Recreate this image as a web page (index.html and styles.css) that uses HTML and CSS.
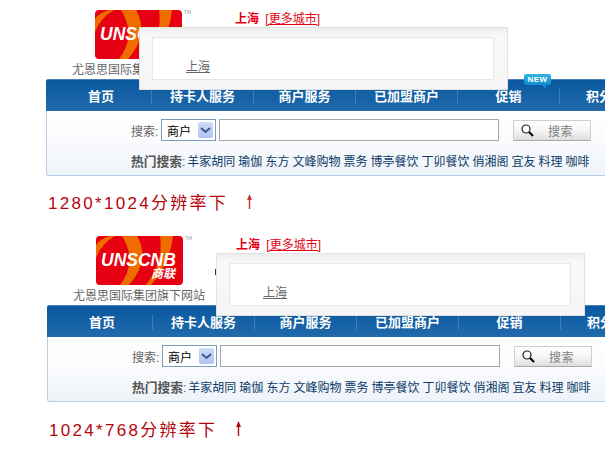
FILE: index.html
```html
<!DOCTYPE html>
<html lang="zh-CN">
<head>
    <meta charset="UTF-8">
    <title>分辨率对比</title>
    <link rel="stylesheet" href="styles.css">
</head>
<body>
    <!-- 1280*1024 -->
    <section class="shot shot-large">
        <div class="top">
            <div class="brand">
                <svg class="logo" width="87" height="49" viewBox="0 0 87 49">
                    <rect width="87" height="49" rx="4" fill="#e60012"/>
                    <path d="M0 9Q5 2 15 0H19Q6 7 0 22Z" fill="#ef6c00"/>
                    <path d="M26 0H41Q55 24 33 49H24Q42 26 26 0Z" fill="#ef6c00"/>
                    <path d="M64 0H77Q74 28 55 49H50Q68 26 64 0Z" fill="#ef6c00"/>
                    <text class="logo-name" x="5" y="30">UNSCNB</text>
                    <text class="logo-sub" x="55" y="42">商联</text>
                </svg>
                <span class="tm">TM</span>
                <p class="tagline">尤恩思国际集团旗下网站</p>
            </div>
            <div class="city"><b>上海</b> <a href="#">[更多城市]</a></div>
            <i class="peek"></i>
        </div>
        <nav class="nav">
            <a href="#">首页</a>
            <a href="#">持卡人服务</a>
            <a href="#">商户服务</a>
            <a href="#">已加盟商户</a>
            <a href="#" class="has-new">促销<span class="new">NEW</span></a>
            <a href="#">积分</a>
        </nav>
        <div class="search">
            <div class="search-row">
                <span class="search-label">搜索:</span>
                <div class="select">商户<span class="select-arrow"><svg width="11" height="7" viewBox="0 0 11 7"><path d="M1 1L5.5 5L10 1" fill="none" stroke="#3e5a8c" stroke-width="2"/></svg></span></div>
                <input class="search-input" type="text">
                <button class="search-btn" type="button">
                    <svg width="13" height="13" viewBox="0 0 13 13"><circle cx="5" cy="5" r="4" fill="#fff" stroke="#222" stroke-width="1.2"/><path d="M8 8L12 12" stroke="#000" stroke-width="2.2"/></svg>
                    <span>搜索</span>
                </button>
            </div>
            <div class="hot">
                <b>热门搜索</b>:<a href="#">羊家胡同</a><a href="#">瑜伽</a><a href="#">东方</a><a href="#">文峰购物</a><a href="#">票务</a><a href="#">博亭餐饮</a><a href="#">丁卯餐饮</a><a href="#">俏湘阁</a><a href="#">宜友</a><a href="#">料理</a><a href="#">咖啡</a>
            </div>
        </div>
        <p class="caption">1280*1024分辨率下<svg class="arrow" width="5" height="15" viewBox="0 0 5 15"><path d="M2.5 0L5 6H3.2V15H1.8V6H0Z" fill="#c8313a"/></svg></p>
        <div class="popup">
            <div class="popup-inner"><a href="#">上海</a></div>
        </div>
    </section>

    <!-- 1024*768 -->
    <section class="shot shot-small">
        <div class="top">
            <div class="brand">
                <svg class="logo" width="87" height="49" viewBox="0 0 87 49">
                    <rect width="87" height="49" rx="4" fill="#e60012"/>
                    <path d="M0 9Q5 2 15 0H19Q6 7 0 22Z" fill="#ef6c00"/>
                    <path d="M26 0H41Q55 24 33 49H24Q42 26 26 0Z" fill="#ef6c00"/>
                    <path d="M64 0H77Q74 28 55 49H50Q68 26 64 0Z" fill="#ef6c00"/>
                    <text class="logo-name" x="5" y="30">UNSCNB</text>
                    <text class="logo-sub" x="55" y="42">商联</text>
                </svg>
                <span class="tm">TM</span>
                <p class="tagline">尤恩思国际集团旗下网站</p>
            </div>
            <div class="city"><b>上海</b> <a href="#">[更多城市]</a></div>
            <i class="peek"></i>
        </div>
        <nav class="nav">
            <a href="#">首页</a>
            <a href="#">持卡人服务</a>
            <a href="#">商户服务</a>
            <a href="#">已加盟商户</a>
            <a href="#">促销</a>
            <a href="#">积分</a>
        </nav>
        <div class="search">
            <div class="search-row">
                <span class="search-label">搜索:</span>
                <div class="select">商户<span class="select-arrow"><svg width="11" height="7" viewBox="0 0 11 7"><path d="M1 1L5.5 5L10 1" fill="none" stroke="#3e5a8c" stroke-width="2"/></svg></span></div>
                <input class="search-input" type="text">
                <button class="search-btn" type="button">
                    <svg width="13" height="13" viewBox="0 0 13 13"><circle cx="5" cy="5" r="4" fill="#fff" stroke="#222" stroke-width="1.2"/><path d="M8 8L12 12" stroke="#000" stroke-width="2.2"/></svg>
                    <span>搜索</span>
                </button>
            </div>
            <div class="hot">
                <b>热门搜索</b>:<a href="#">羊家胡同</a><a href="#">瑜伽</a><a href="#">东方</a><a href="#">文峰购物</a><a href="#">票务</a><a href="#">博亭餐饮</a><a href="#">丁卯餐饮</a><a href="#">俏湘阁</a><a href="#">宜友</a><a href="#">料理</a><a href="#">咖啡</a>
            </div>
        </div>
        <p class="caption">1024*768分辨率下<svg class="arrow" width="5" height="15" viewBox="0 0 5 15"><path d="M2.5 0L5 6H3.2V15H1.8V6H0Z" fill="#b5050c"/></svg></p>
        <div class="popup">
            <div class="popup-inner"><a href="#">上海</a></div>
        </div>
    </section>
</body>
</html>
```

FILE: styles.css
```css
html, body {
    margin: 0;
    padding: 0;
    height: 463px;
    overflow: hidden;
    background: #fff;
}

body {
    font-family: "Liberation Sans", "Noto Sans CJK SC", sans-serif;
    font-size: 12px;
    color: #666;
}

a {
    color: inherit;
    text-decoration: none;
}

.shot {
    position: relative;
    height: 226px;
    padding-left: 46px;
}

.shot-small {
    padding-left: 47px;
    height: 237px;
}

/* logo + city */
.top {
    position: relative;
    height: 79px;
    display: flex;
}

.brand {
    position: relative;
    width: 189px;
    padding-top: 10px;
    box-sizing: border-box;
}

.logo {
    display: block;
    margin-left: 49px;
}

.logo-name {
    font: italic bold 17.5px "Liberation Sans", sans-serif;
    fill: #fff;
}

.logo-sub {
    font: italic bold 12px "Noto Sans CJK SC", sans-serif;
    fill: #fff;
}

.tm {
    position: absolute;
    left: 138px;
    top: 9px;
    font-size: 5px;
    color: #999;
}

.tagline {
    margin: 3px 0 0 26px;
    line-height: 16px;
    white-space: nowrap;
}

.city {
    padding-top: 11px;
    line-height: 16px;
    color: #e60012;
    white-space: nowrap;
}

.city a {
    text-decoration: underline;
    margin-left: 3px;
}

.peek {
    position: absolute;
    left: 168px;
    top: 43px;
    width: 2px;
    height: 6px;
    background: #1a3a6a;
}

/* nav */
.nav {
    position: relative;
    display: flex;
    height: 32px;
    box-sizing: border-box;
    border-top: 1px solid #4a80b8;
    border-radius: 2px 0 0 0;
    background: linear-gradient(#09589f, #216aab);
}

.nav a {
    position: relative;
    flex: none;
    width: 102px;
    height: 15px;
    margin-top: 9px;
    line-height: 15px;
    text-align: center;
    font-size: 13px;
    font-weight: bold;
    color: #fff;
    border-right: 1px solid #3f7db8;
    box-sizing: border-box;
}

.nav a:first-child {
    width: 106px;
    padding-left: 5px;
}

.nav a:last-child {
    border-right: none;
    white-space: nowrap;
    text-align: left;
    padding-left: 26px;
}

.new {
    position: absolute;
    left: 66px;
    top: -15px;
    width: 27px;
    height: 11px;
    line-height: 11px;
    border-radius: 2px;
    background: linear-gradient(#35b4e2, #0f8ccb);
    font: bold 8px/11px "Liberation Sans", sans-serif;
    letter-spacing: 0.5px;
}

.new::after {
    content: "";
    position: absolute;
    right: 5px;
    top: 11px;
    border-top: 4px solid #0f8ccb;
    border-left: 4px solid transparent;
}

/* search box */
.search {
    height: 65px;
    box-sizing: border-box;
    border: 1px solid #b7cfe6;
    border-top: none;
    border-right: none;
    border-radius: 0 0 0 3px;
    background: linear-gradient(#fff, #fbfcfe 40%, #eef3f9);
    padding: 8px 0 0 84px;
}

.search-row {
    display: flex;
    align-items: center;
    height: 22px;
}

.search-label {
    width: 30px;
    white-space: nowrap;
}

.select {
    display: flex;
    justify-content: space-between;
    align-items: center;
    width: 55px;
    height: 22px;
    box-sizing: border-box;
    border: 1px solid #7c9cbc;
    padding: 0 2px 0 5px;
    background: #fff;
    color: #000;
}

.select-arrow {
    display: flex;
    align-items: center;
    justify-content: center;
    width: 15px;
    height: 16px;
    border-radius: 2px;
    background: linear-gradient(#d0dcf7, #b0c4ef);
}

.search-input {
    width: 280px;
    height: 22px;
    box-sizing: border-box;
    margin: 0 14px 0 3px;
    padding: 0;
    border: 1px solid #a5a5a5;
    background: #fff;
}

.search-btn {
    display: flex;
    align-items: center;
    width: 78px;
    height: 21px;
    box-sizing: border-box;
    margin: 1px 0 0;
    padding: 0 0 0 7px;
    border: 1px solid #cfcfcf;
    border-bottom-color: #aaa;
    background: linear-gradient(#fff, #f5f5f5 50%, #dedede);
    font: 12px "Noto Sans CJK SC", sans-serif;
    color: #808080;
}

.search-btn span {
    margin-left: 14px;
    letter-spacing: 0.5px;
}

.hot {
    margin-top: 13px;
    line-height: 16px;
    white-space: nowrap;
}

.hot b {
    font-size: 12.75px;
    color: #555;
}

.hot a {
    color: #0b3a68;
    margin-right: 3px;
}

.hot b + a {
    margin-left: 2px;
}

/* caption */
.caption {
    margin: 18px 0 0 2px;
    line-height: 20px;
    font-size: 17px;
    letter-spacing: 2.3px;
    color: #b5050c;
    white-space: nowrap;
}

.shot-small .caption {
    margin-top: 19px;
}

.arrow {
    margin-left: 19px;
}

/* city popup, sits over the header */
.popup {
    position: absolute;
    left: 139px;
    top: 27px;
    width: 369px;
    height: 63px;
    box-sizing: border-box;
    border: 1px solid #e0e0e0;
    padding: 9px 13px 9px 12px;
    background: linear-gradient(#eeeeee, #f8f8f8 8px, #f6f6f6);
}

.shot-small .popup {
    left: 216px;
    top: 27px;
}

.popup-inner {
    height: 43px;
    box-sizing: border-box;
    border: 1px solid #e6e6e6;
    background: #fff;
    padding: 21px 0 0 33px;
    line-height: 16px;
}

.popup-inner a {
    text-decoration: underline;
    color: #666;
}
```
